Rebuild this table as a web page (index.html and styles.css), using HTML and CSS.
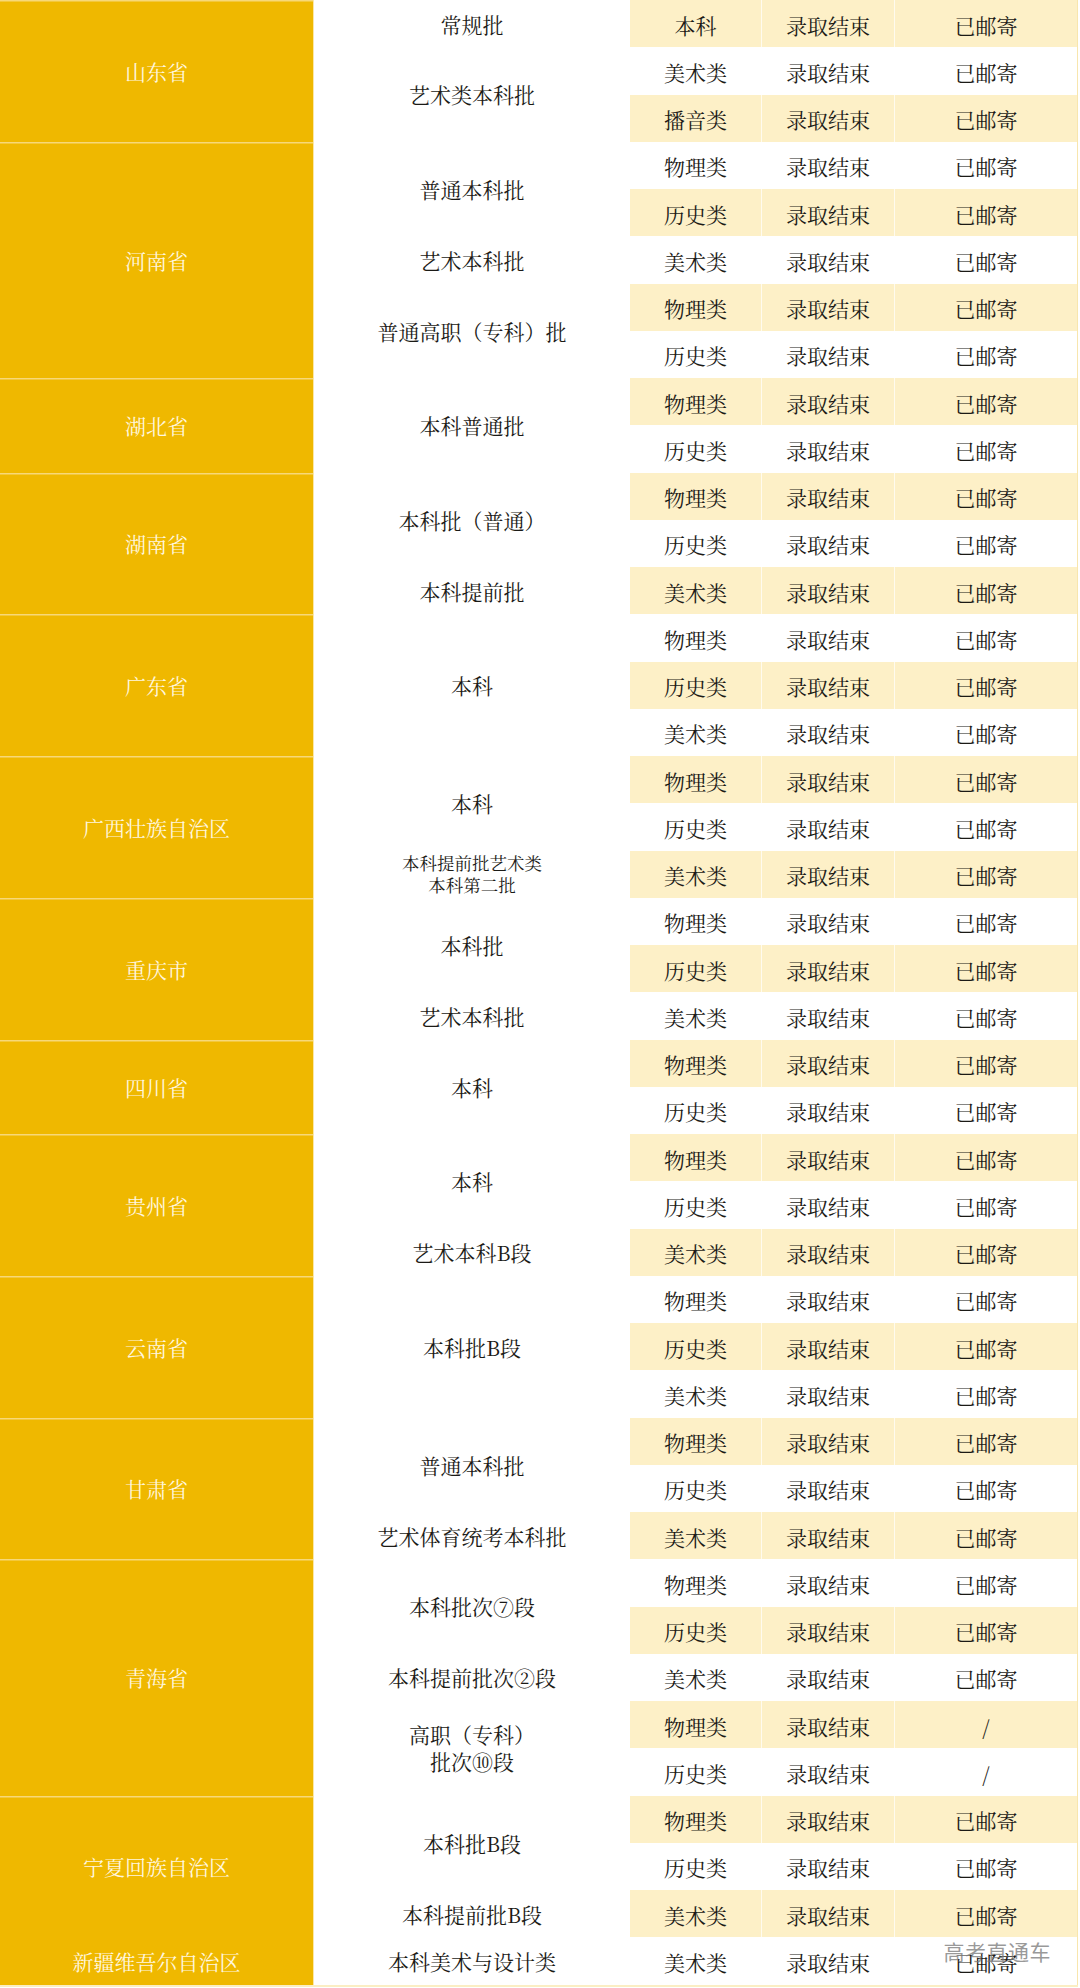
FILE: index.html
```html
<!DOCTYPE html>
<html lang="zh-CN">
<head>
<meta charset="utf-8">
<title>录取通知书邮寄情况</title>
<link rel="stylesheet" href="styles.css">
</head>
<body>
<div class="page">
<div class="table">

  <div class="prov-group">
    <div class="prov">山东省</div>
    <div class="batches">
      <div class="batch-group">
        <div class="batch">常规批</div>
        <div class="rows">
          <div class="row alt"><span class="subj">本科</span><span class="stat">录取结束</span><span class="mail">已邮寄</span></div>
        </div>
      </div>
      <div class="batch-group">
        <div class="batch">艺术类本科批</div>
        <div class="rows">
          <div class="row"><span class="subj">美术类</span><span class="stat">录取结束</span><span class="mail">已邮寄</span></div>
          <div class="row alt"><span class="subj">播音类</span><span class="stat">录取结束</span><span class="mail">已邮寄</span></div>
        </div>
      </div>
    </div>
  </div>

  <div class="prov-group">
    <div class="prov">河南省</div>
    <div class="batches">
      <div class="batch-group">
        <div class="batch">普通本科批</div>
        <div class="rows">
          <div class="row"><span class="subj">物理类</span><span class="stat">录取结束</span><span class="mail">已邮寄</span></div>
          <div class="row alt"><span class="subj">历史类</span><span class="stat">录取结束</span><span class="mail">已邮寄</span></div>
        </div>
      </div>
      <div class="batch-group">
        <div class="batch">艺术本科批</div>
        <div class="rows">
          <div class="row"><span class="subj">美术类</span><span class="stat">录取结束</span><span class="mail">已邮寄</span></div>
        </div>
      </div>
      <div class="batch-group">
        <div class="batch">普通高职（专科）批</div>
        <div class="rows">
          <div class="row alt"><span class="subj">物理类</span><span class="stat">录取结束</span><span class="mail">已邮寄</span></div>
          <div class="row"><span class="subj">历史类</span><span class="stat">录取结束</span><span class="mail">已邮寄</span></div>
        </div>
      </div>
    </div>
  </div>

  <div class="prov-group">
    <div class="prov">湖北省</div>
    <div class="batches">
      <div class="batch-group">
        <div class="batch">本科普通批</div>
        <div class="rows">
          <div class="row alt"><span class="subj">物理类</span><span class="stat">录取结束</span><span class="mail">已邮寄</span></div>
          <div class="row"><span class="subj">历史类</span><span class="stat">录取结束</span><span class="mail">已邮寄</span></div>
        </div>
      </div>
    </div>
  </div>

  <div class="prov-group">
    <div class="prov">湖南省</div>
    <div class="batches">
      <div class="batch-group">
        <div class="batch">本科批（普通）</div>
        <div class="rows">
          <div class="row alt"><span class="subj">物理类</span><span class="stat">录取结束</span><span class="mail">已邮寄</span></div>
          <div class="row"><span class="subj">历史类</span><span class="stat">录取结束</span><span class="mail">已邮寄</span></div>
        </div>
      </div>
      <div class="batch-group">
        <div class="batch">本科提前批</div>
        <div class="rows">
          <div class="row alt"><span class="subj">美术类</span><span class="stat">录取结束</span><span class="mail">已邮寄</span></div>
        </div>
      </div>
    </div>
  </div>

  <div class="prov-group">
    <div class="prov">广东省</div>
    <div class="batches">
      <div class="batch-group">
        <div class="batch">本科</div>
        <div class="rows">
          <div class="row"><span class="subj">物理类</span><span class="stat">录取结束</span><span class="mail">已邮寄</span></div>
          <div class="row alt"><span class="subj">历史类</span><span class="stat">录取结束</span><span class="mail">已邮寄</span></div>
          <div class="row"><span class="subj">美术类</span><span class="stat">录取结束</span><span class="mail">已邮寄</span></div>
        </div>
      </div>
    </div>
  </div>

  <div class="prov-group">
    <div class="prov">广西壮族自治区</div>
    <div class="batches">
      <div class="batch-group">
        <div class="batch">本科</div>
        <div class="rows">
          <div class="row alt"><span class="subj">物理类</span><span class="stat">录取结束</span><span class="mail">已邮寄</span></div>
          <div class="row"><span class="subj">历史类</span><span class="stat">录取结束</span><span class="mail">已邮寄</span></div>
        </div>
      </div>
      <div class="batch-group">
        <div class="batch small">本科提前批艺术类<br>本科第二批</div>
        <div class="rows">
          <div class="row alt"><span class="subj">美术类</span><span class="stat">录取结束</span><span class="mail">已邮寄</span></div>
        </div>
      </div>
    </div>
  </div>

  <div class="prov-group">
    <div class="prov">重庆市</div>
    <div class="batches">
      <div class="batch-group">
        <div class="batch">本科批</div>
        <div class="rows">
          <div class="row"><span class="subj">物理类</span><span class="stat">录取结束</span><span class="mail">已邮寄</span></div>
          <div class="row alt"><span class="subj">历史类</span><span class="stat">录取结束</span><span class="mail">已邮寄</span></div>
        </div>
      </div>
      <div class="batch-group">
        <div class="batch">艺术本科批</div>
        <div class="rows">
          <div class="row"><span class="subj">美术类</span><span class="stat">录取结束</span><span class="mail">已邮寄</span></div>
        </div>
      </div>
    </div>
  </div>

  <div class="prov-group">
    <div class="prov">四川省</div>
    <div class="batches">
      <div class="batch-group">
        <div class="batch">本科</div>
        <div class="rows">
          <div class="row alt"><span class="subj">物理类</span><span class="stat">录取结束</span><span class="mail">已邮寄</span></div>
          <div class="row"><span class="subj">历史类</span><span class="stat">录取结束</span><span class="mail">已邮寄</span></div>
        </div>
      </div>
    </div>
  </div>

  <div class="prov-group">
    <div class="prov">贵州省</div>
    <div class="batches">
      <div class="batch-group">
        <div class="batch">本科</div>
        <div class="rows">
          <div class="row alt"><span class="subj">物理类</span><span class="stat">录取结束</span><span class="mail">已邮寄</span></div>
          <div class="row"><span class="subj">历史类</span><span class="stat">录取结束</span><span class="mail">已邮寄</span></div>
        </div>
      </div>
      <div class="batch-group">
        <div class="batch">艺术本科B段</div>
        <div class="rows">
          <div class="row alt"><span class="subj">美术类</span><span class="stat">录取结束</span><span class="mail">已邮寄</span></div>
        </div>
      </div>
    </div>
  </div>

  <div class="prov-group">
    <div class="prov">云南省</div>
    <div class="batches">
      <div class="batch-group">
        <div class="batch">本科批B段</div>
        <div class="rows">
          <div class="row"><span class="subj">物理类</span><span class="stat">录取结束</span><span class="mail">已邮寄</span></div>
          <div class="row alt"><span class="subj">历史类</span><span class="stat">录取结束</span><span class="mail">已邮寄</span></div>
          <div class="row"><span class="subj">美术类</span><span class="stat">录取结束</span><span class="mail">已邮寄</span></div>
        </div>
      </div>
    </div>
  </div>

  <div class="prov-group">
    <div class="prov">甘肃省</div>
    <div class="batches">
      <div class="batch-group">
        <div class="batch">普通本科批</div>
        <div class="rows">
          <div class="row alt"><span class="subj">物理类</span><span class="stat">录取结束</span><span class="mail">已邮寄</span></div>
          <div class="row"><span class="subj">历史类</span><span class="stat">录取结束</span><span class="mail">已邮寄</span></div>
        </div>
      </div>
      <div class="batch-group">
        <div class="batch">艺术体育统考本科批</div>
        <div class="rows">
          <div class="row alt"><span class="subj">美术类</span><span class="stat">录取结束</span><span class="mail">已邮寄</span></div>
        </div>
      </div>
    </div>
  </div>

  <div class="prov-group">
    <div class="prov">青海省</div>
    <div class="batches">
      <div class="batch-group">
        <div class="batch">本科批次⑦段</div>
        <div class="rows">
          <div class="row"><span class="subj">物理类</span><span class="stat">录取结束</span><span class="mail">已邮寄</span></div>
          <div class="row alt"><span class="subj">历史类</span><span class="stat">录取结束</span><span class="mail">已邮寄</span></div>
        </div>
      </div>
      <div class="batch-group">
        <div class="batch">本科提前批次②段</div>
        <div class="rows">
          <div class="row"><span class="subj">美术类</span><span class="stat">录取结束</span><span class="mail">已邮寄</span></div>
        </div>
      </div>
      <div class="batch-group">
        <div class="batch tall">高职（专科）<br>批次⑩段</div>
        <div class="rows">
          <div class="row alt"><span class="subj">物理类</span><span class="stat">录取结束</span><span class="mail">/</span></div>
          <div class="row"><span class="subj">历史类</span><span class="stat">录取结束</span><span class="mail">/</span></div>
        </div>
      </div>
    </div>
  </div>

  <div class="prov-group">
    <div class="prov">宁夏回族自治区</div>
    <div class="batches">
      <div class="batch-group">
        <div class="batch">本科批B段</div>
        <div class="rows">
          <div class="row alt"><span class="subj">物理类</span><span class="stat">录取结束</span><span class="mail">已邮寄</span></div>
          <div class="row"><span class="subj">历史类</span><span class="stat">录取结束</span><span class="mail">已邮寄</span></div>
        </div>
      </div>
      <div class="batch-group">
        <div class="batch">本科提前批B段</div>
        <div class="rows">
          <div class="row alt"><span class="subj">美术类</span><span class="stat">录取结束</span><span class="mail">已邮寄</span></div>
        </div>
      </div>
    </div>
  </div>

  <div class="prov-group">
    <div class="prov no-sep">新疆维吾尔自治区</div>
    <div class="batches">
      <div class="batch-group">
        <div class="batch">本科美术与设计类</div>
        <div class="rows">
          <div class="row"><span class="subj">美术类</span><span class="stat">录取结束</span><span class="mail">已邮寄</span></div>
        </div>
      </div>
    </div>
  </div>

</div>
<div class="watermark">高考直通车</div>
</div>
</body>
</html>
```

FILE: styles.css
```css
html, body {
  margin: 0;
  padding: 0;
  background: #ffffff;
}

.page {
  position: relative;
  width: 1080px;
  height: 1988px;
  overflow: hidden;
  font-family: "Noto Serif CJK SC", "Noto Sans CJK SC", serif;
  color: #1b1a16;
}

.table {
  display: flex;
  flex-direction: column;
  width: 1078px;
  border-bottom: 2px solid #fbeec4;
}

.prov-group {
  display: flex;
}

.prov {
  width: 313px;
  flex: none;
  background: #efb800;
  color: #fff6de;
  font-size: 21px;
  display: flex;
  align-items: center;
  justify-content: center;
  box-shadow: inset 0 1.5px 0 #f7d879;
  border-right: 1px solid #fbe7a6;
}

.prov.no-sep {
  box-shadow: none;
}

.batches {
  flex: 1;
  display: flex;
  flex-direction: column;
}

.batch-group {
  display: flex;
}

.batch {
  width: 316px;
  flex: none;
  display: flex;
  align-items: center;
  justify-content: center;
  text-align: center;
  font-size: 21px;
  line-height: 1.25;
}

.batch.small {
  font-size: 17.5px;
  line-height: 22px;
}

.batch.tall {
  line-height: 27px;
}

.rows {
  flex: 1;
  display: flex;
  flex-direction: column;
  border-right: 1px solid #f8e6ad;
}

.row {
  height: 47.26px;
  display: flex;
  font-size: 21px;
}

.row.alt {
  background: #fdf0c7;
}

.row span {
  display: flex;
  align-items: center;
  justify-content: center;
  padding-top: 2px;
}

.subj {
  width: 131px;
}

.stat {
  width: 132px;
  border-left: 1px solid rgba(255, 255, 255, 0.7);
}

.mail {
  flex: 1;
  border-left: 1px solid rgba(255, 255, 255, 0.7);
}

.watermark {
  position: absolute;
  right: 29px;
  top: 1936px;
  font-family: "Noto Sans CJK SC", sans-serif;
  font-size: 21px;
  color: rgba(120, 120, 120, 0.75);
  letter-spacing: 0.5px;
}
```
